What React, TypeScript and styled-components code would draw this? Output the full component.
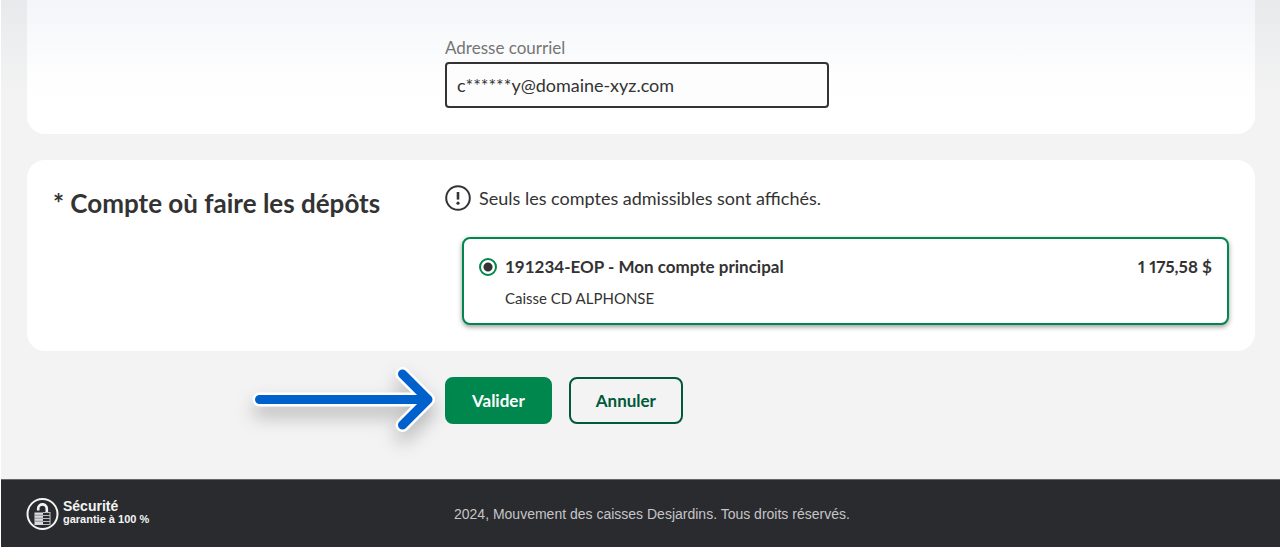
import React, { useState } from 'react';
import styled, { createGlobalStyle } from 'styled-components';

const sans = `Lato, 'Liberation Sans', sans-serif`;
const arial = `'Liberation Sans', Arial, sans-serif`;
const ink = '#333333';
const green = '#00874e';
const darkGreen = '#00593a';

const GlobalStyle = createGlobalStyle`
  *, *::before, *::after { box-sizing: border-box; }
  body {
    margin: 0;
    background: #ffffff;
    color: ${ink};
    font-family: ${sans};
  }
`;

const Page = styled.div`
  margin: 0 0 1px 1px;
  background: linear-gradient(#e8e9eb 0, #eeeff0 48px, #f3f3f3 100px);
`;

const Main = styled.main`
  padding: 0 25px 55px 26px;
`;

const Card = styled.section<{ $continued?: boolean }>`
  display: grid;
  grid-template-columns: 392px minmax(0, 1fr);
  margin-bottom: 26px;
  padding: ${(p) => (p.$continued ? '36px 26px 26px' : '24px 26px 26px')};
  border-radius: ${(p) => (p.$continued ? '0 0 18px 18px' : '18px')};
  background: ${(p) =>
    p.$continued ? 'linear-gradient(#f4f5f8 0, #f9fafc 40px, #fefefe 80px, #ffffff 120px)' : '#ffffff'};
`;

const Field = styled.div`
  grid-column: 2;
  display: flex;
  flex-direction: column;
`;

const Label = styled.label`
  color: #757575;
  font-size: 17px;
  line-height: 24px;
  margin-bottom: 2px;
`;

const TextInput = styled.input`
  width: 100%;
  max-width: 384px;
  height: 46px;
  padding: 0 10px;
  border: 2px solid ${ink};
  border-radius: 4px;
  background: #fdfdfe;
  color: ${ink};
  font: 18px ${sans};
`;

const Heading = styled.h2`
  margin: 3px 0 0;
  font-size: 26px;
  line-height: 32px;
  font-weight: 700;
`;

const Notice = styled.p`
  display: flex;
  align-items: center;
  gap: 8px;
  margin: 0 0 25px;
  font-size: 18px;
  line-height: 28px;
`;

const Account = styled.label`
  display: grid;
  grid-template-columns: 18px 1fr auto;
  column-gap: 8px;
  align-items: center;
  margin-left: 17px;
  padding: 16px 15px 13px;
  border: 2px solid ${green};
  border-radius: 8px;
  background: #ffffff;
  box-shadow: 0 2px 5px rgba(0, 0, 0, 0.4);
`;

const Radio = styled.input`
  appearance: none;
  width: 18px;
  height: 18px;
  margin: 0;
  border: 2px solid ${green};
  border-radius: 50%;
  background: #ffffff;
  &:checked {
    background: radial-gradient(circle, ${ink} 4px, #ffffff 5px);
  }
`;

const Strong = styled.span`
  font-size: 17px;
  line-height: 24px;
  font-weight: 700;
`;

const Amount = styled(Strong)`
  font-variant-numeric: proportional-nums;
`;

const Branch = styled.span`
  grid-column: 2;
  margin-top: 7px;
  font-size: 15px;
  line-height: 24px;
`;

const Actions = styled.div`
  position: relative;
  display: flex;
  gap: 17px;
  margin-left: 418px;
`;

const Button = styled.button<{ $primary?: boolean }>`
  height: 47px;
  padding: 0 25px;
  border: 2px solid ${(p) => (p.$primary ? green : darkGreen)};
  border-radius: 8px;
  background: ${(p) => (p.$primary ? green : 'transparent')};
  color: ${(p) => (p.$primary ? '#ffffff' : darkGreen)};
  font: 700 17px ${sans};
`;

const Pointer = styled.svg`
  position: absolute;
  right: 100%;
  top: 50%;
  transform: translateY(-50%);
  overflow: visible;
  filter: drop-shadow(0 10px 9px rgba(0, 0, 0, 0.25));
  fill: none;
  stroke-linecap: round;
  stroke-linejoin: round;
`;

const Footer = styled.footer`
  display: grid;
  grid-template-columns: 428px minmax(0, 1fr);
  align-items: center;
  min-height: 68px;
  padding: 0 25px;
  border-top: 1px solid #64686a;
  background: #2a2b2f;
  font-family: ${arial};
`;

const Security = styled.a`
  display: flex;
  align-items: center;
  gap: 4px;
  color: #f4f4f4;
  text-decoration: none;
  font-size: 11px;
  line-height: 12px;
  font-weight: 700;
`;

const SecurityText = styled.span`
  padding-bottom: 3px;
`;

const SecurityTitle = styled.span`
  display: block;
  font-size: 14px;
  line-height: 13px;
`;

const Copyright = styled.small`
  color: #c5c5c7;
  font-size: 14px;
  line-height: 20px;
`;

const arrowPath = 'M10.5 31.5H179M153.5 6L179 31.5L153.5 57';

export default function App() {
  const [account, setAccount] = useState('191234');
  return (
    <>
      <GlobalStyle />
      <Page>
        <Main>
          <Card $continued>
            <Field>
              <Label htmlFor="email">Adresse courriel</Label>
              <TextInput id="email" type="text" defaultValue="c******y@domaine-xyz.com" />
            </Field>
          </Card>
          <Card>
            <Heading>* Compte où faire les dépôts</Heading>
            <div>
              <Notice>
                <svg width="26" height="26" viewBox="0 0 26 26" fill="none" stroke={ink} aria-hidden="true">
                  <circle cx="13" cy="13" r="11.8" strokeWidth="2" />
                  <path d="M13 7V14.6" strokeWidth="2.6" />
                  <circle cx="13" cy="18.2" r="1.6" fill={ink} stroke="none" />
                </svg>
                Seuls les comptes admissibles sont affichés.
              </Notice>
              <Account>
                <Radio
                  type="radio"
                  name="account"
                  value="191234"
                  checked={account === '191234'}
                  onChange={(e) => setAccount(e.target.value)}
                />
                <Strong>191234-EOP - Mon compte principal</Strong>
                <Amount>1 175,58 $</Amount>
                <Branch>Caisse CD ALPHONSE</Branch>
              </Account>
            </div>
          </Card>
          <Actions>
            <Pointer width="196" height="66" viewBox="0 0 196 66" aria-hidden="true">
              <path d={arrowPath} stroke="#ffffff" strokeWidth="14" />
              <path d={arrowPath} stroke="#0060cc" strokeWidth="9" />
            </Pointer>
            <Button type="button" $primary>Valider</Button>
            <Button type="button">Annuler</Button>
          </Actions>
        </Main>
        <Footer>
          <Security href="#securite">
            <svg width="33" height="34" viewBox="0 0 33 34" fill="none" aria-hidden="true">
              <circle cx="16.5" cy="17" r="15" stroke="#f4f4f4" strokeWidth="2" />
              <path d="M12.2 13.5V11.5C12.2 6 20.8 6 20.8 11.5V15" stroke="#f4f4f4" strokeWidth="2.6" />
              <path d="M8.5 15.5H17V28H8.5Z" fill="#d9dadb" />
              <path d="M8.5 18.2H17M8.5 21.2H17M8.5 24.2H17" stroke="#77797c" strokeWidth="0.8" />
              <path d="M17 15.5H24.5M17 18.5H24.5M17 21.5H24.5M17 24.5H24.5M17 27.5H24.5M24 15V28" stroke="#b9babc" strokeWidth="1.1" />
            </svg>
            <SecurityText>
              <SecurityTitle>Sécurité</SecurityTitle>
              garantie à 100 %
            </SecurityText>
          </Security>
          <Copyright>2024, Mouvement des caisses Desjardins. Tous droits réservés.</Copyright>
        </Footer>
      </Page>
    </>
  );
}
